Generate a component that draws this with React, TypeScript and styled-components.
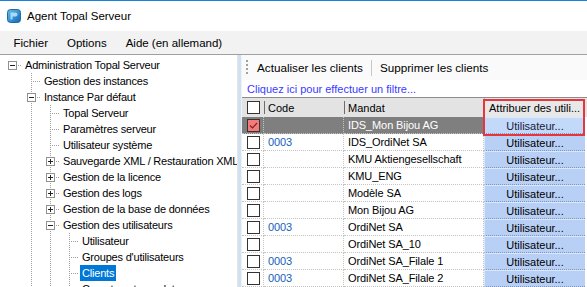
import React from 'react';
import styled, { createGlobalStyle } from 'styled-components';

const Global = createGlobalStyle`
  html, body { margin: 0; padding: 0; background: #fff; overflow: hidden; }
  body { font-family: "Liberation Sans", Arial, sans-serif; }
`;

const Window = styled.div`
  width: 587px;
  height: 287px;
  display: flex;
  flex-direction: column;
  box-sizing: border-box;
  border-top: 1px solid #1883d7;
  background: #fff;
  overflow: hidden;
`;

const TitleBar = styled.div`
  height: 30px;
  flex: none;
  display: flex;
  align-items: center;
  padding-left: 7px;
  gap: 6px;
`;

const Title = styled.span`
  font-size: 11.5px;
  color: #000;
`;

const MenuBar = styled.div`
  height: 23px;
  flex: none;
  display: flex;
  align-items: center;
  padding-left: 4px;
  background: #f2f2f2;
  border-bottom: 1px solid #a0a0a0;
`;

const MenuItem = styled.span`
  font-size: 11.5px;
  padding: 0 9.5px;
  color: #000;
`;

const Body = styled.div`
  flex: 1;
  display: flex;
  min-height: 0;
`;

const TreePanel = styled.div`
  width: 237px;
  flex: none;
  overflow: hidden;
  padding-top: 2px;
  background: #fff;
`;

const Splitter = styled.div`
  width: 5px;
  flex: none;
  box-sizing: border-box;
  background: #d3e0f2;
  border-left: 1px solid #e6e6e6;
  border-right: 1px solid #eef3fa;
`;

const RightPanel = styled.div`
  flex: 1;
  display: flex;
  flex-direction: column;
  min-width: 0;
  overflow: hidden;
`;

const dotsV = 'repeating-linear-gradient(to bottom, #a0a0a0 0 1px, transparent 1px 2px)';
const dotsH = 'repeating-linear-gradient(to right, #a0a0a0 0 1px, transparent 1px 2px)';

const TreeRow = styled.div`
  height: 16px;
  display: flex;
  align-items: stretch;
  padding-left: 2px;
  white-space: nowrap;
`;

const Guide = styled.span<{ $line: boolean }>`
  width: 19px;
  flex: none;
  background: ${p => (p.$line ? `${dotsV} 10px 0 / 1px 100% no-repeat` : 'none')};
`;

const Connector = styled.span<{ $vert: boolean }>`
  width: 19px;
  flex: none;
  display: flex;
  align-items: flex-start;
  background: ${p =>
    `${dotsH} 10px 8px / 9px 1px no-repeat${p.$vert ? `, ${dotsV} 10px 0 / 1px 100% no-repeat` : ''}`};
`;

const ExpanderBox = styled.span`
  display: block;
  margin: 4px 0 0 6px;
  width: 9px;
  height: 9px;
`;

const TreeLabel = styled.span<{ $sel?: boolean }>`
  margin-left: 2px;
  padding: 0 2px;
  font-size: 11px;
  letter-spacing: -0.2px;
  line-height: 16px;
  color: ${p => (p.$sel ? '#fff' : '#000')};
  background: ${p => (p.$sel ? '#0078d7' : 'transparent')};
`;

const Toolbar = styled.div`
  height: 25px;
  flex: none;
  display: flex;
  align-items: center;
  padding-left: 4px;
  background: #fafafa;
`;

const Grip = styled.span`
  width: 2px;
  height: 15px;
  margin-right: 5px;
  background: repeating-linear-gradient(to bottom, #a0a0a0 0 2px, transparent 2px 4px);
`;

const ToolButton = styled.span`
  font-size: 11.7px;
  padding: 0 4px;
  color: #000;
`;

const ToolSep = styled.span`
  width: 1px;
  height: 16px;
  margin: 0 4px;
  background: #c8c8c8;
`;

const FilterBar = styled.div`
  height: 17px;
  flex: none;
  display: flex;
  align-items: center;
  padding-left: 5px;
  font-size: 11px;
  color: #3a3aff;
  background: #fff;
`;

const GridWrap = styled.div`
  position: relative;
  flex: 1;
  border-top: 1px solid #8c8c8c;
`;

const cols = '22px 80px 140px 101px';

const HeaderRow = styled.div`
  display: grid;
  grid-template-columns: ${cols};
  height: 19px;
  background: #e3e3e3;
`;

const HeaderCell = styled.div<{ $sep?: boolean }>`
  display: flex;
  align-items: center;
  padding-left: ${p => (p.$sep ? '4px' : '5px')};
  font-size: 11px;
  color: #000;
  white-space: nowrap;
  overflow: hidden;
  background: ${p => (p.$sep ? 'linear-gradient(#6d6d6d, #6d6d6d) 0 3px / 1px 13px no-repeat' : 'none')};
`;

const AssignHeader = styled(HeaderCell)`
  padding-left: 4px;
  background: #e8e8e8;
  border-left: 1px solid #b4b4b4;
`;

const DataRow = styled.div`
  display: grid;
  grid-template-columns: ${cols};
  height: 17px;
`;

const Cell = styled.div<{ $sel?: boolean; $code?: boolean }>`
  display: flex;
  align-items: center;
  padding-left: 4px;
  box-sizing: border-box;
  font-size: 11px;
  letter-spacing: -0.1px;
  white-space: nowrap;
  overflow: hidden;
  border-right: 1px dotted #c4c4c4;
  border-bottom: 1px dotted #c4c4c4;
  background: ${p => (p.$sel ? '#7f7f7f' : '#fff')};
  color: ${p => (p.$sel ? '#fff' : p.$code ? '#1560bd' : '#000')};
`;

const CheckCell = styled(Cell)`
  padding-left: 5px;
`;

const ButtonCell = styled.div<{ $sel?: boolean }>`
  display: flex;
  align-items: center;
  justify-content: center;
  box-sizing: border-box;
  font-size: 11px;
  color: ${p => (p.$sel ? '#1a1a3a' : '#000')};
  background: ${p => (p.$sel ? '#c3d9fa' : '#b8d0f6')};
  border-top: 1px solid #dbe7fb;
  border-left: 1px solid #dbe7fb;
  border-bottom: 1px dotted #8296b8;
`;

const Box = styled.span<{ $checked?: boolean }>`
  display: block;
  width: 13px;
  height: 13px;
  box-sizing: border-box;
  border: 1px solid #333;
  background: ${p => (p.$checked ? '#f27c7c' : '#fff')};
`;

const Highlight = styled.div`
  position: absolute;
  left: 241px;
  top: 1px;
  width: 102px;
  height: 37px;
  box-sizing: border-box;
  border: 2px solid #e8343c;
  pointer-events: none;
`;

const AppIcon = () => (
  <svg width="14" height="14" viewBox="0 0 14 14">
    <defs>
      <linearGradient id="ig" x1="0" y1="0" x2="1" y2="1">
        <stop offset="0" stopColor="#5fc0ee" />
        <stop offset="1" stopColor="#1565b5" />
      </linearGradient>
    </defs>
    <rect x="0.5" y="0.5" width="13" height="13" rx="3" fill="url(#ig)" stroke="#1d6aa8" />
    <path d="M3.5 3.5h5a2 2 0 0 1 0 4h-3v3h-2z" fill="#bfe6fb" opacity="0.85" />
  </svg>
);

const Expander = ({ open }: { open: boolean }) => (
  <ExpanderBox>
    <svg width="9" height="9" viewBox="0 0 9 9" style={{ display: 'block' }}>
      <rect x="0.5" y="0.5" width="8" height="8" fill="#fff" stroke="#919191" />
      <path d="M2 4.5H7" stroke="#222" />
      {!open && <path d="M4.5 2V7" stroke="#222" />}
    </svg>
  </ExpanderBox>
);

const Check = ({ checked }: { checked?: boolean }) => (
  <Box $checked={checked}>
    {checked && (
      <svg width="11" height="11" viewBox="0 0 11 11" style={{ display: 'block' }}>
        <path d="M2 5.5l2.5 2.5L9 3" fill="none" stroke="#8a1c1c" strokeWidth="1.2" />
      </svg>
    )}
  </Box>
);

type TNode = { d: number; t: string; e?: 'open' | 'closed'; sel?: boolean };

const tree: TNode[] = [
  { d: 0, t: 'Administration Topal Serveur', e: 'open' },
  { d: 1, t: 'Gestion des instances' },
  { d: 1, t: 'Instance Par défaut', e: 'open' },
  { d: 2, t: 'Topal Serveur' },
  { d: 2, t: 'Paramètres serveur' },
  { d: 2, t: 'Utilisateur système' },
  { d: 2, t: 'Sauvegarde XML / Restauration XML', e: 'closed' },
  { d: 2, t: 'Gestion de la licence', e: 'closed' },
  { d: 2, t: 'Gestion des logs', e: 'closed' },
  { d: 2, t: 'Gestion de la base de données', e: 'closed' },
  { d: 2, t: 'Gestion des utilisateurs', e: 'open' },
  { d: 3, t: 'Utilisateur' },
  { d: 3, t: "Groupes d'utilisateurs" },
  { d: 3, t: 'Clients', sel: true },
  { d: 3, t: 'Comptes et mandats' },
];

const rows = [
  { code: '', name: 'IDS_Mon Bijou AG', sel: true },
  { code: '0003', name: 'IDS_OrdiNet SA' },
  { code: '', name: 'KMU Aktiengesellschaft' },
  { code: '', name: 'KMU_ENG' },
  { code: '', name: 'Modèle SA' },
  { code: '', name: 'Mon Bijou AG' },
  { code: '0003', name: 'OrdiNet SA' },
  { code: '', name: 'OrdiNet SA_10' },
  { code: '0003', name: 'OrdiNet SA_Filale 1' },
  { code: '0003', name: 'OrdiNet SA_Filale 2' },
];

export default function App() {
  return (
    <>
      <Global />
      <Window>
        <TitleBar>
          <AppIcon />
          <Title>Agent Topal Serveur</Title>
        </TitleBar>
        <MenuBar>
          <MenuItem>Fichier</MenuItem>
          <MenuItem>Options</MenuItem>
          <MenuItem>Aide (en allemand)</MenuItem>
        </MenuBar>
        <Body>
          <TreePanel>
            {tree.map((n, i) => (
              <TreeRow key={i}>
                {Array.from({ length: n.d }).map((_, k) => (
                  <Guide key={k} $line={k >= 1} />
                ))}
                <Connector $vert={n.d >= 1}>{n.e && <Expander open={n.e === 'open'} />}</Connector>
                <TreeLabel $sel={n.sel}>{n.t}</TreeLabel>
              </TreeRow>
            ))}
          </TreePanel>
          <Splitter />
          <RightPanel>
            <Toolbar>
              <Grip />
              <ToolButton>Actualiser les clients</ToolButton>
              <ToolSep />
              <ToolButton>Supprimer les clients</ToolButton>
            </Toolbar>
            <FilterBar>Cliquez ici pour effectuer un filtre...</FilterBar>
            <GridWrap>
              <HeaderRow>
                <HeaderCell>
                  <Check />
                </HeaderCell>
                <HeaderCell $sep>Code</HeaderCell>
                <HeaderCell $sep>Mandat</HeaderCell>
                <AssignHeader>Attribuer des utili...</AssignHeader>
              </HeaderRow>
              {rows.map((r, i) => (
                <DataRow key={i}>
                  <CheckCell $sel={r.sel}>
                    <Check checked={r.sel} />
                  </CheckCell>
                  <Cell $sel={r.sel} $code>
                    {r.code}
                  </Cell>
                  <Cell $sel={r.sel}>{r.name}</Cell>
                  <ButtonCell $sel={r.sel}>Utilisateur...</ButtonCell>
                </DataRow>
              ))}
              <Highlight />
            </GridWrap>
          </RightPanel>
        </Body>
      </Window>
    </>
  );
}
